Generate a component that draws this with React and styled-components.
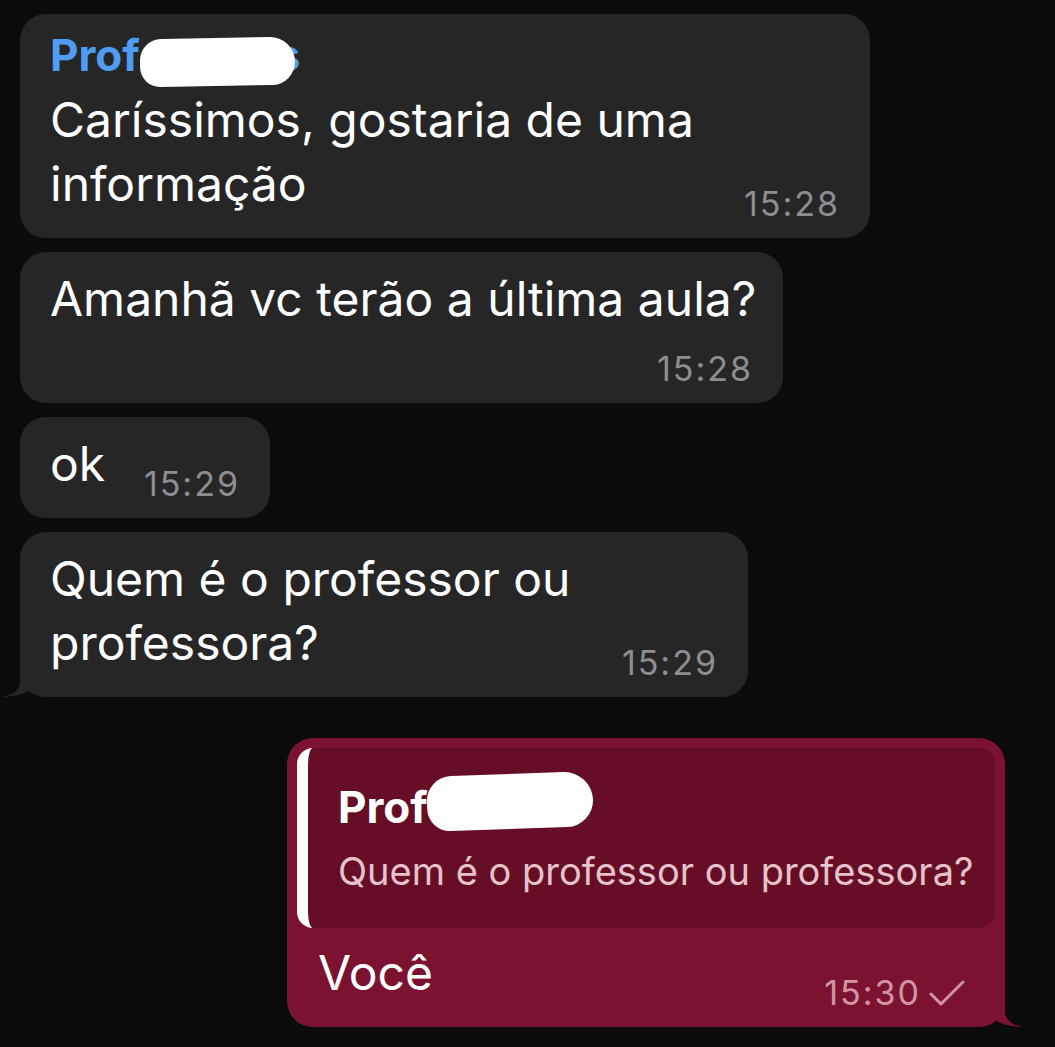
import React from "react";
import styled, { createGlobalStyle } from "styled-components";

const GlobalStyle = createGlobalStyle`
  html, body {
    margin: 0;
    padding: 0;
    background: #0b0b0b;
  }
  body {
    font-family: "Inter", "Noto Sans", sans-serif;
    color: #ffffff;
  }
`;

const Chat = styled.div`
  display: flex;
  flex-direction: column;
  align-items: flex-start;
  gap: 14px;
  padding: 14px 50px 20px 20px;
  min-height: 1047px;
  box-sizing: border-box;
`;

const Bubble = styled.div`
  position: relative;
  box-sizing: border-box;
  width: ${(p) => p.$width}px;
  padding: ${(p) => (p.$out ? "10px 10px 0" : "15px 30px 14px")};
  border-radius: 26px;
  background: ${(p) => (p.$out ? "#7b1330" : "#262627")};
  align-self: ${(p) => (p.$out ? "flex-end" : "flex-start")};
  margin-top: ${(p) => (p.$out ? "27px" : "0")};
`;

const Tail = styled.svg`
  position: absolute;
  bottom: 0;
  width: 50px;
  height: 40px;
  ${(p) =>
    p.$out
      ? "right: -20px; transform: scaleX(-1);"
      : "left: -20px;"}
`;

const Name = styled.div`
  position: relative;
  font-size: 44px;
  font-weight: 700;
  line-height: 52px;
  color: ${(p) => p.$color || "#4f9cf0"};
  margin-bottom: ${(p) => (p.$reply ? "0" : "7px")};
`;

const Gap = styled.span`
  display: inline-block;
  width: ${(p) => p.$w}px;
`;

const Redacted = styled.span`
  position: absolute;
  left: ${(p) => p.$left}px;
  top: ${(p) => p.$top}px;
  width: ${(p) => p.$w}px;
  height: ${(p) => p.$h}px;
  background: #ffffff;
  border-radius: 26px 30px 28px 24px;
  transform: rotate(${(p) => p.$rot}deg);
`;

const Footer = styled.div`
  display: flex;
  flex-direction: ${(p) => (p.$stacked ? "column" : "row")};
  align-items: flex-end;
  justify-content: space-between;
  padding: ${(p) => (p.$out ? "0 30px 14px 21px" : "0")};
  margin-top: ${(p) => (p.$out ? "13px" : "0")};
`;

const Text = styled.div`
  font-size: 48px;
  line-height: 64px;
  color: #ffffff;
  white-space: nowrap;
  margin-bottom: ${(p) => (p.$stacked ? "0" : "8px")};
  align-self: flex-start;
`;

const Meta = styled.div`
  display: flex;
  align-items: center;
  gap: 8px;
  font-size: 34px;
  letter-spacing: 2px;
  line-height: 40px;
  color: ${(p) => (p.$out ? "#d394a4" : "#8e8e90")};
  margin-top: ${(p) => (p.$stacked ? "18px" : "0")};
  margin-left: 24px;
  white-space: nowrap;
`;

const Reply = styled.div`
  box-sizing: border-box;
  border-radius: 16px;
  background: #650e26;
  border-left: 11px solid #ffffff;
  padding: 33px 20px 34px 30px;
`;

const ReplyText = styled.div`
  font-size: 38px;
  line-height: 46px;
  color: #e6c2cb;
  margin-top: 15px;
  white-space: nowrap;
`;

function BubbleTail({ out, color }) {
  return (
    <Tail $out={out} viewBox="0 0 50 40">
      <path
        d="M20 0 V24 C20 32 14 38 2 40 C12 40 22 38 30 33 C36 37 42 40 50 40 V0 Z"
        fill={color}
      />
    </Tail>
  );
}

function Check() {
  return (
    <svg width="36" height="28" viewBox="0 0 36 28">
      <polyline
        points="2,15 12,25 34,3"
        fill="none"
        stroke="#d394a4"
        strokeWidth="3"
        strokeLinecap="round"
        strokeLinejoin="round"
      />
    </svg>
  );
}

function Incoming({ width, name, lines, time, stacked, tail }) {
  return (
    <Bubble $width={width}>
      {name && (
        <Name>
          Prof
          <Gap $w={136} />s
          <Redacted $left={90} $top={9} $w={155} $h={48} $rot={-1} />
        </Name>
      )}
      <Footer $stacked={stacked}>
        <Text $stacked={stacked}>
          {lines.map((l, i) => (
            <div key={i}>{l}</div>
          ))}
        </Text>
        <Meta $stacked={stacked}>{time}</Meta>
      </Footer>
      {tail && <BubbleTail color="#262627" />}
    </Bubble>
  );
}

export default function App() {
  return (
    <>
      <GlobalStyle />
      <Chat>
        <Incoming
          width={850}
          name
          lines={["Caríssimos, gostaria de uma", "informação"]}
          time="15:28"
        />
        <Incoming
          width={763}
          lines={["Amanhã vc terão a última aula?"]}
          time="15:28"
          stacked
        />
        <Incoming width={250} lines={["ok"]} time="15:29" />
        <Incoming
          width={728}
          lines={["Quem é o professor ou", "professora?"]}
          time="15:29"
          tail
        />
        <Bubble $out $width={718}>
          <Reply>
            <Name $reply $color="#ffffff">
              Prof
              <Redacted $left={89} $top={-7} $w={166} $h={55} $rot={-2} />
            </Name>
            <ReplyText>Quem é o professor ou professora?</ReplyText>
          </Reply>
          <Footer $out>
            <Text>Você</Text>
            <Meta $out>
              15:30
              <Check />
            </Meta>
          </Footer>
          <BubbleTail out color="#7b1330" />
        </Bubble>
      </Chat>
    </>
  );
}
